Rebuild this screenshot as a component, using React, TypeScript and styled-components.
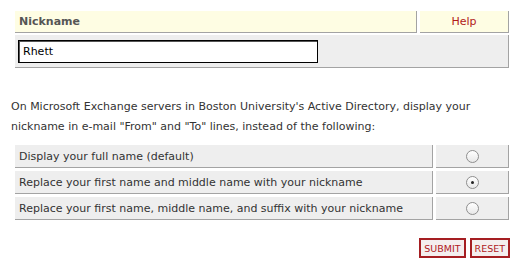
import React, { useState } from "react";
import styled, { createGlobalStyle } from "styled-components";

const GlobalStyle = createGlobalStyle`
  body {
    margin: 0;
    background: #ffffff;
    font-family: "DejaVu Sans", Verdana, sans-serif;
    font-size: 11px;
    color: #333333;
  }
`;

const Page = styled.div`
  width: 522px;
  height: 268px;
  padding-top: 11px;
  box-sizing: border-box;
`;

const Table = styled.div`
  margin-left: 15px;
  width: 494px;
  display: flex;
  flex-direction: column;
  gap: 2px;
`;

const Row = styled.div`
  display: flex;
  gap: 3px;
`;

const Cell = styled.div<{ $tone?: "head" | "body"; $width?: number; $center?: boolean }>`
  box-sizing: border-box;
  flex: ${({ $width }) => ($width ? `0 0 ${$width}px` : "1 1 auto")};
  background: ${({ $tone }) => ($tone === "head" ? "#fefde3" : "#eeeeee")};
  border-right: 1px solid #a3a3a3;
  border-bottom: 1px solid #a3a3a3;
  display: flex;
  align-items: center;
  justify-content: ${({ $center }) => ($center ? "center" : "flex-start")};
  padding: 0 4px;
`;

const HeadLabel = styled.span`
  font-weight: bold;
  color: #555555;
`;

const HelpLink = styled.span`
  color: #b11a1a;
`;

const TextInput = styled.input`
  box-sizing: border-box;
  width: 300px;
  height: 23px;
  margin: 5px 0 4px -1px;
  border: 1px solid #000;
  box-shadow: inset 1px 1px 0 #555;
  padding: 0 4px;
  font-family: "DejaVu Sans", Verdana, sans-serif;
  font-size: 11px;
  color: #000;
  outline: none;
`;

const Intro = styled.p`
  margin: 29px 0 0 11px;
  line-height: 20px;
  width: 505px;
`;

const Options = styled.div`
  margin: 8px 0 0 15px;
  width: 494px;
  display: flex;
  flex-direction: column;
  gap: 3px;
`;

const OptionRow = styled.div`
  display: flex;
  gap: 3px;
  height: 23px;
`;

const RadioDot = styled.span<{ $checked: boolean }>`
  box-sizing: border-box;
  width: 13px;
  height: 13px;
  border-radius: 50%;
  border: 1px solid #8e8e8e;
  background: linear-gradient(#ffffff, #e8e8e8);
  display: flex;
  align-items: center;
  justify-content: center;
  cursor: pointer;

  &::after {
    content: "";
    width: 3px;
    height: 3px;
    border-radius: 50%;
    background: #222;
    display: ${({ $checked }) => ($checked ? "block" : "none")};
  }
`;

const Actions = styled.div`
  display: flex;
  justify-content: flex-end;
  gap: 4px;
  margin: 18px 12px 0 0;
`;

const ActionButton = styled.button`
  box-sizing: border-box;
  height: 20px;
  padding: 0 3px;
  border: 2px solid #a51e22;
  background: #f4eeee;
  color: #b0181c;
  font-family: "DejaVu Sans", Verdana, sans-serif;
  font-size: 9.5px;
  text-transform: uppercase;
  cursor: pointer;
`;

const choices = [
  "Display your full name (default)",
  "Replace your first name and middle name with your nickname",
  "Replace your first name, middle name, and suffix with your nickname",
];

export default function App() {
  const [nick, setNick] = useState("Rhett");
  const [choice, setChoice] = useState(1);

  return (
    <Page>
      <GlobalStyle />
      <Table>
        <Row style={{ height: 22 }}>
          <Cell $tone="head">
            <HeadLabel>Nickname</HeadLabel>
          </Cell>
          <Cell $tone="head" $width={89} $center>
            <HelpLink>Help</HelpLink>
          </Cell>
        </Row>
        <Row>
          <Cell>
            <TextInput value={nick} onChange={(e) => setNick(e.target.value)} />
          </Cell>
        </Row>
      </Table>

      <Intro>
        On Microsoft Exchange servers in Boston University's Active Directory, display your
        <br />
        nickname in e-mail "From" and "To" lines, instead of the following:
      </Intro>

      <Options>
        {choices.map((label, i) => (
          <OptionRow key={label}>
            <Cell>{label}</Cell>
            <Cell $width={73} $center>
              <RadioDot $checked={choice === i} onClick={() => setChoice(i)} />
            </Cell>
          </OptionRow>
        ))}
      </Options>

      <Actions>
        <ActionButton>Submit</ActionButton>
        <ActionButton>Reset</ActionButton>
      </Actions>
    </Page>
  );
}
